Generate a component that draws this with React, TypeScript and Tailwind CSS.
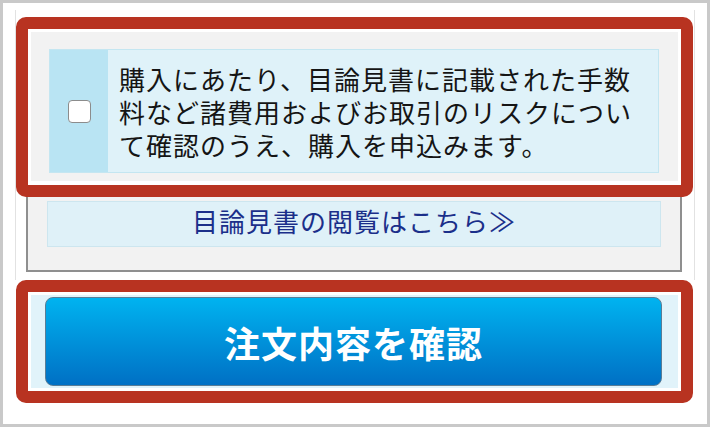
import React from 'react';

const App = () => {
  return (
    <div className="w-[710px] h-[427px] border-[3px] border-[#c9c9c9] bg-white px-[12px] pt-[7px] font-['Noto_Sans_CJK_JP','Noto_Sans',sans-serif]">
      {/* screenshot edges */}
      <div className="border-x border-[#e2e2e2] pt-[7px] pb-[8px]">
        {/* Agreement block */}
        <div className="mr-px rounded-[10px] border-[12px] border-[#b83321] bg-white px-[3px] pt-[3px] pb-[4px]">
          <div className="bg-[#f2f2f2] pt-[17px] pb-[8px] pl-[18px] pr-[19px]">
            <label className="flex h-[124px] border border-[#c4e6f1]">
              <div className="flex w-[58px] items-center justify-center bg-[#b9e4f3]">
                <input
                  type="checkbox"
                  className="h-[23px] w-[23px] appearance-none rounded-[4px] border border-[#8c8c8c] bg-white"
                />
              </div>
              <div className="flex flex-1 items-center bg-[#dff2f9] pl-[11px] text-[26px] leading-[33px] tracking-[1px] text-[#151515]">
                <p>
                  購入にあたり、目論見書に記載された手数
                  <br />
                  料など諸費用およびお取引のリスクについ
                  <br />
                  て確認のうえ、購入を申込みます。
                </p>
              </div>
            </label>
          </div>
        </div>

        {/* Prospectus link */}
        <div className="ml-[10px] mr-[12px] border-x-2 border-b-2 border-[#8f8f8f] bg-[#f2f2f2] px-[19px] pt-[4px] pb-[23px]">
          <a className="flex h-[46px] items-center justify-center border border-[#cde6ef] bg-[#dff1f8] pb-[6px] text-[26px] leading-[32px] tracking-[1px] text-[#1b2f8a]">
            目論見書の閲覧はこちら≫
          </a>
        </div>
      </div>

      {/* Confirm button */}
      <div className="ml-px w-[677px] rounded-[10px] border-[12px] border-[#b83321] bg-white p-[3px]">
        <div className="bg-[#e1f3fa] py-[2px] pl-[14px] pr-[16px]">
          <button className="flex h-[89px] w-full items-center justify-center rounded-[8px] border border-[#5a7d96] bg-linear-to-b from-[#00b3f0] to-[#0070c4] text-[36px] font-bold tracking-[1px] text-white">
            注文内容を確認
          </button>
        </div>
      </div>
    </div>
  );
};

export default App;
